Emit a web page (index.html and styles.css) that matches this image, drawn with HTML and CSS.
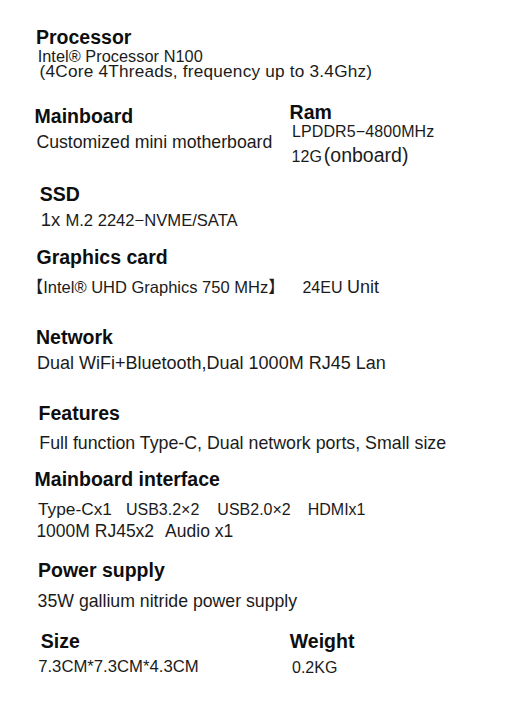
FILE: index.html
```html
<!DOCTYPE html>
<html lang="en">
<head>
<meta charset="utf-8">
<title>Specifications</title>
<link rel="stylesheet" href="styles.css">
</head>
<body>
<main class="sheet">
  <section class="spec">
    <h2 class="t">Processor</h2>
    <p class="v v-model">Intel® Processor N100</p>
    <p class="v v-freq">(4Core 4Threads, frequency up to 3.4Ghz)</p>
  </section>

  <div class="pair pair-board">
    <section class="spec">
      <h2 class="t t-board">Mainboard</h2>
      <p class="v v-board">Customized mini motherboard</p>
    </section>
    <section class="spec">
      <h2 class="t t-ram">Ram</h2>
      <p class="v v-lpddr">LPDDR5−4800MHz</p>
      <p class="v v-cap">12G<span class="onboard">(onboard)</span></p>
    </section>
  </div>

  <section class="spec">
    <h2 class="t t-ssd">SSD</h2>
    <p class="v v-ssd">1x <span class="m2">M.2 2242−NVME/SATA</span></p>
  </section>

  <section class="spec">
    <h2 class="t t-gpu">Graphics card</h2>
    <p class="v v-gpu"><span class="br">【</span>Intel® UHD Graphics 750 MHz<span class="br">】</span><span class="eu">24EU</span> <span class="unit">Unit</span></p>
  </section>

  <section class="spec">
    <h2 class="t t-net">Network</h2>
    <p class="v v-net">Dual WiFi+Bluetooth,Dual 1000M RJ45 Lan</p>
  </section>

  <section class="spec">
    <h2 class="t t-feat">Features</h2>
    <p class="v v-feat">Full function Type-C, Dual network ports, Small size</p>
  </section>

  <section class="spec">
    <h2 class="t t-io">Mainboard interface</h2>
    <p class="v v-io1">Type-Cx1<span class="port p-usb3">USB3.2×2</span><span class="port p-usb2">USB2.0×2</span><span class="port p-hdmi">HDMIx1</span></p>
    <p class="v v-io2">1000M RJ45x2<span class="audio">Audio x1</span></p>
  </section>

  <section class="spec">
    <h2 class="t t-power">Power supply</h2>
    <p class="v v-power">35W gallium nitride power supply</p>
  </section>

  <div class="pair pair-size">
    <section class="spec">
      <h2 class="t t-size">Size</h2>
      <p class="v v-dim">7.3CM*7.3CM*4.3CM</p>
    </section>
    <section class="spec">
      <h2 class="t t-weight">Weight</h2>
      <p class="v v-kg">0.2KG</p>
    </section>
  </div>
</main>
</body>
</html>
```
FILE: styles.css
```css
html, body {
  margin: 0;
  padding: 0;
  background: #ffffff;
}

body {
  font-family: "Liberation Sans", Arial, sans-serif;
  color: #1b1b1b;
  width: 528px;
  height: 720px;
  overflow: hidden;
}

.sheet {
  padding: 29.5px 0 0 34px;
}

.t,
.v {
  margin: 0;
  line-height: 14px;
  white-space: nowrap;
}

.t {
  font-size: 19.5px;
  font-weight: 700;
  color: #0e0e0e;
  padding-left: 2px;
}

.v span {
  line-height: 0;
}

.pair {
  display: grid;
  grid-template-columns: 255px 1fr;
  align-items: start;
}

/* Processor */
.v-model { font-size: 16.3px; margin-top: 5.8px; padding-left: 3.7px; letter-spacing: 0.05px; }
.v-freq { font-size: 17.2px; margin-top: 0.9px; padding-left: 5.6px; letter-spacing: 0.22px; }

/* Mainboard / Ram */
.pair-board { margin-top: 26.4px; }
.t-board { margin-top: 4px; padding-left: 0.6px; }
.v-board { font-size: 17.7px; margin-top: 12.6px; padding-left: 2.4px; }
.t-ram { padding-left: 0.6px; }
.v-lpddr { font-size: 16px; margin-top: 6.2px; padding-left: 3px; letter-spacing: 0.1px; }
.v-cap { font-size: 16px; margin-top: 11.4px; padding-left: 2.6px; }
.onboard { font-size: 19.5px; margin-left: 2px; }

/* SSD */
.t-ssd { margin-top: 22.8px; padding-left: 5.8px; }
.v-ssd { font-size: 18.5px; margin-top: 12.3px; padding-left: 6.7px; }
.m2 { font-size: 16.6px; }

/* Graphics */
.t-gpu { margin-top: 23.2px; padding-left: 2.5px; }
.v-gpu { font-size: 16.5px; margin-top: 16px; padding-left: 1px; }
.br {
  font-family: "Noto Sans CJK SC", sans-serif;
  font-feature-settings: "halt";
}
.eu { font-size: 16px; margin-left: 26px; }
.unit { font-size: 18px; }

/* Network */
.t-net { margin-top: 35.7px; padding-left: 2px; }
.v-net { font-size: 18px; margin-top: 11.8px; padding-left: 3px; }

/* Features */
.t-feat { margin-top: 36.2px; padding-left: 4.6px; }
.v-feat { font-size: 17.8px; margin-top: 15.9px; padding-left: 5.3px; }

/* Interface */
.t-io { margin-top: 22.1px; padding-left: 0.6px; }
.v-io1 { font-size: 17.3px; margin-top: 15.8px; padding-left: 4px; }
.port { font-size: 16px; }
.p-usb3 { margin-left: 14px; }
.p-usb2 { margin-left: 18px; }
.p-hdmi { margin-left: 17px; }
.v-io2 { font-size: 17.5px; margin-top: 8.6px; padding-left: 2.4px; }
.audio { margin-left: 11px; }

/* Power */
.t-power { margin-top: 24.3px; padding-left: 4px; }
.v-power { font-size: 17.7px; margin-top: 17.2px; padding-left: 3.6px; }

/* Size / Weight */
.pair-size { margin-top: 25.8px; }
.t-size { padding-left: 6.8px; }
.v-dim { font-size: 16.7px; margin-top: 12.6px; padding-left: 4.2px; }
.t-weight { margin-top: 0.6px; padding-left: 0.8px; }
.v-kg { font-size: 16px; margin-top: 12.2px; padding-left: 3px; }
```
